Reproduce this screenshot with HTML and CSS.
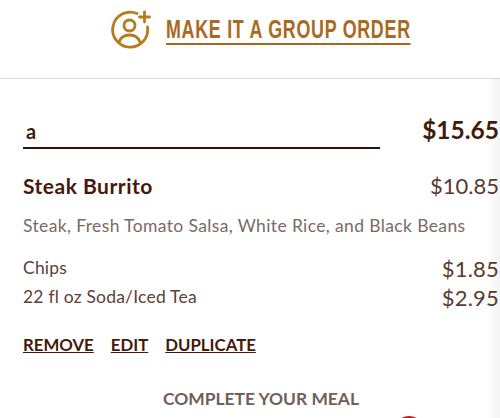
FILE: index.html
```html
<!DOCTYPE html>
<html lang="en">
<head>
    <meta charset="UTF-8">
    <title>Your Order</title>
    <link rel="stylesheet" href="styles.css">
</head>
<body>
    <div class="group-order">
        <svg class="group-icon" width="42" height="40" viewBox="0 0 42 40" fill="none" stroke="#b47c1a" stroke-width="2.8" stroke-linecap="round">
            <path d="M27 3.500 A17.500 17.500 0 1 0 37.500 17"/>
            <circle cx="19.500" cy="15.500" r="5.500"/>
            <path d="M9 32 C11 26.500 15 25 19.500 25 C24 25 28 26.500 30 32"/>
            <path d="M34.500 2 V12 M29.500 7 H39.500"/>
        </svg>
        <a class="group-link" href="#">MAKE IT A GROUP ORDER</a>
    </div>

    <div class="cart">
        <div class="name-row">
            <div class="name-field">a</div>
            <div class="total">$15.65</div>
        </div>

        <div class="item-row">
            <h3 class="item-name">Steak Burrito</h3>
            <div class="price">$10.85</div>
        </div>
        <p class="item-desc">Steak, Fresh Tomato Salsa, White Rice, and Black Beans</p>

        <div class="side-row">
            <span>Chips</span>
            <div class="price">$1.85</div>
        </div>
        <div class="side-row">
            <span>22 fl oz Soda/Iced Tea</span>
            <div class="price">$2.95</div>
        </div>

        <div class="actions">
            <a href="#">REMOVE</a>
            <a href="#">EDIT</a>
            <a href="#">DUPLICATE</a>
        </div>

        <h4 class="meal-title">COMPLETE YOUR MEAL</h4>
        <div class="meal-items">
            <div class="meal-dot"></div>
        </div>
    </div>

    <div class="edge-shadow"></div>
</body>
</html>
```

FILE: styles.css
```css
html, body {
    height: 418px;
    overflow: hidden;
}

body {
    margin: 0;
    background: #fff;
    color: #451a0a;
    font-family: Lato, Arial, sans-serif;
    position: relative;
}

a {
    color: inherit;
}

.group-order {
    height: 78px;
    border-bottom: 1px solid #dcdcdc;
    display: flex;
    align-items: flex-start;
    padding-left: 110px;
}

.group-icon {
    margin-top: 10px;
    margin-right: 14px;
    flex-shrink: 0;
}

.group-link {
    margin-top: 16px;
    padding-bottom: 1px;
    font-family: "Liberation Sans", Arial, sans-serif;
    font-weight: 700;
    font-size: 25px;
    line-height: 26px;
    letter-spacing: 1px;
    white-space: nowrap;
    color: #a9691f;
    text-decoration: none;
    border-bottom: 2px solid #a9691f;
    transform: scaleX(0.715);
    transform-origin: left top;
}

.cart {
    padding: 0 1px 0 23px;
}

.name-row,
.item-row,
.side-row {
    display: flex;
    justify-content: space-between;
}

.name-row {
    margin-top: 36px;
    align-items: flex-start;
}

.name-field {
    width: 354px;
    height: 32px;
    padding-left: 3px;
    border-bottom: 2px solid #2e1405;
    font-size: 20px;
    font-weight: 700;
    line-height: 32px;
}

.total {
    font-size: 24.500px;
    font-weight: 700;
    line-height: 30px;
}

.item-row {
    margin-top: 23px;
    align-items: center;
}

.item-name {
    margin: 0;
    font-size: 21px;
    font-weight: 700;
    line-height: 28px;
    letter-spacing: 0.5px;
}

.price {
    font-size: 22px;
    line-height: 28px;
    color: #5a3a2c;
}

.item-desc {
    margin: 14px 0 17px;
    font-size: 17.500px;
    line-height: 24px;
    letter-spacing: 0.37px;
    color: #7a6a64;
}

.side-row {
    height: 29px;
    font-size: 17.500px;
    line-height: 26px;
    letter-spacing: 0.2px;
    color: #5a4238;
}

.actions {
    margin-top: 20px;
    display: flex;
    gap: 17px;
    font-size: 16.800px;
    font-weight: 700;
    line-height: 24px;
}

.meal-title {
    margin: 30px 0 0;
    text-align: center;
    font-size: 17.400px;
    font-weight: 700;
    line-height: 24px;
    color: #6f5f58;
}

/* only the top of the next row shows above the fold */
.meal-items {
    display: flex;
    justify-content: flex-end;
    height: 2px;
    overflow: hidden;
    padding-right: 75px;
    margin-top: 5px;
}

.meal-dot {
    flex-shrink: 0;
    width: 30px;
    height: 30px;
    border-radius: 50%;
    background: #b5232c;
}

.edge-shadow {
    position: absolute;
    top: 78px;
    right: 0;
    bottom: 0;
    width: 12px;
    background: linear-gradient(to right, rgba(0,0,0,0), rgba(0,0,0,0.05));
}
```
